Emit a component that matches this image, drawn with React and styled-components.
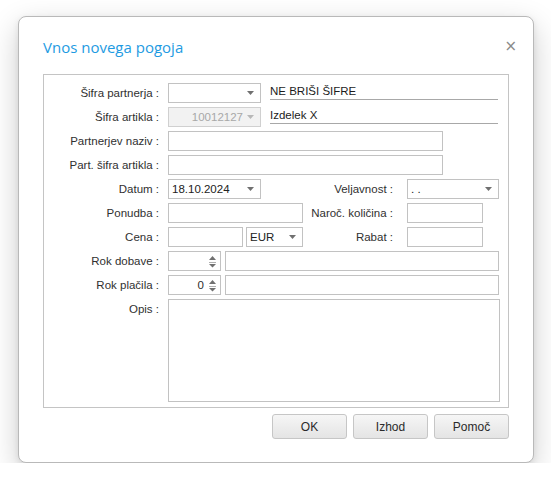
import styled, { createGlobalStyle } from "styled-components";

const GlobalStyle = createGlobalStyle`
  html, body {
    margin: 0;
    padding: 0;
    background: #ffffff;
  }
  body {
    font-family: "Liberation Sans", Arial, sans-serif;
    font-size: 11.5px;
    color: #2c2c2c;
  }
`;

function ArrowDown({ color = "#707070" }) {
  return (
    <svg width="7" height="4" viewBox="0 0 7 4">
      <path d="M0 0h7L3.5 4z" fill={color} />
    </svg>
  );
}

function SpinArrows() {
  return (
    <SpinBox>
      <svg width="7" height="13" viewBox="0 0 7 13">
        <path d="M0 5L3.5 1 7 5z" fill="#707070" />
        <path d="M0 7.5h7" stroke="#b0b0b0" strokeWidth="1" />
        <path d="M0 9h7L3.5 12.5z" fill="#707070" />
      </svg>
    </SpinBox>
  );
}

function Combo({ width, value, disabled }) {
  return (
    <ComboBox $width={width} $disabled={disabled}>
      <ComboValue $disabled={disabled}>{value}</ComboValue>
      <ArrowDown color={disabled ? "#b8b8b8" : "#707070"} />
    </ComboBox>
  );
}

function Spinner({ value }) {
  return (
    <SpinField>
      <SpinValue>{value}</SpinValue>
      <SpinArrows />
    </SpinField>
  );
}

function App() {
  return (
    <>
      <GlobalStyle />
      <Dialog>
        <Header>
          <Title>Vnos novega pogoja</Title>
          <Close>×</Close>
        </Header>
        <GroupBox>
          <Row>
            <Label>Šifra partnerja :</Label>
            <Fields>
              <Combo width={93} value="" />
              <Caption>NE BRIŠI ŠIFRE</Caption>
            </Fields>
          </Row>
          <Row>
            <Label>Šifra artikla :</Label>
            <Fields>
              <Combo width={93} value="10012127" disabled />
              <Caption>Izdelek X</Caption>
            </Fields>
          </Row>
          <Row>
            <Label>Partnerjev naziv :</Label>
            <Fields>
              <Input $width={275} />
            </Fields>
          </Row>
          <Row>
            <Label>Part. šifra artikla :</Label>
            <Fields>
              <Input $width={275} />
            </Fields>
          </Row>
          <Row>
            <Label>Datum :</Label>
            <Fields>
              <LeftCell>
                <Combo width={93} value="18.10.2024" />
              </LeftCell>
              <SideLabel>Veljavnost :</SideLabel>
              <Combo width={92} value=". ." />
            </Fields>
          </Row>
          <Row>
            <Label>Ponudba :</Label>
            <Fields>
              <LeftCell>
                <Input $width={135} />
              </LeftCell>
              <SideLabel>Naroč. količina :</SideLabel>
              <Input $width={76} />
            </Fields>
          </Row>
          <Row>
            <Label>Cena :</Label>
            <Fields>
              <LeftCell>
                <Input $width={75} />
                <Combo width={57} value="EUR" />
              </LeftCell>
              <SideLabel>Rabat :</SideLabel>
              <Input $width={76} />
            </Fields>
          </Row>
          <Row>
            <Label>Rok dobave :</Label>
            <Fields>
              <Spinner value="" />
              <Input $width={274} />
            </Fields>
          </Row>
          <Row>
            <Label>Rok plačila :</Label>
            <Fields>
              <Spinner value="0" />
              <Input $width={274} />
            </Fields>
          </Row>
          <Row>
            <Label>Opis :</Label>
            <Fields>
              <Memo />
            </Fields>
          </Row>
        </GroupBox>
        <Buttons>
          <Button>OK</Button>
          <Button>Izhod</Button>
          <Button>Pomoč</Button>
        </Buttons>
      </Dialog>
    </>
  );
}

const Dialog = styled.div`
  box-sizing: border-box;
  margin: 16px 0 0 18px;
  width: 516px;
  height: 447px;
  padding: 0 24px;
  background: #ffffff;
  border: 1px solid #b9b9b9;
  border-radius: 8px;
  box-shadow: 0 10px 30px rgba(0, 0, 0, 0.2), 0 2px 6px rgba(0, 0, 0, 0.08);
`;

const Header = styled.div`
  display: flex;
  justify-content: space-between;
  align-items: center;
  height: 57px;
`;

const Title = styled.div`
  font-family: "Open Sans", "Noto Sans", sans-serif;
  font-size: 15px;
  color: #1e9be2;
  padding-top: 3px;
`;

const Close = styled.div`
  font-family: "DejaVu Sans", sans-serif;
  font-size: 15px;
  color: #8a8a8a;
  margin-right: -8px;
  padding-top: 1px;
`;

const GroupBox = styled.div`
  box-sizing: border-box;
  width: 466px;
  height: 334px;
  border: 1px solid #c4c4c4;
  padding: 8px 0 6px;
  display: flex;
  flex-direction: column;
  gap: 4px;
`;

const Row = styled.div`
  display: grid;
  grid-template-columns: 115px 1fr;
  column-gap: 9px;
  align-items: start;
`;

const Label = styled.div`
  text-align: right;
  line-height: 20px;
  white-space: nowrap;
  color: #303030;
`;

const Fields = styled.div`
  display: flex;
  align-items: start;
  gap: 4px;
`;

const LeftCell = styled.div`
  display: flex;
  gap: 3px;
  width: 135px;
`;

const SideLabel = styled.div`
  box-sizing: border-box;
  width: 100px;
  margin-left: -4px;
  padding-right: 10px;
  text-align: right;
  line-height: 20px;
  white-space: nowrap;
  color: #303030;
`;

const fieldBox = `
  box-sizing: border-box;
  height: 20px;
  border: 1px solid #c2c2c2;
  background: #ffffff;
`;

const Input = styled.div`
  ${fieldBox}
  width: ${(p) => p.$width}px;
`;

const ComboBox = styled.div`
  ${fieldBox}
  width: ${(p) => p.$width}px;
  display: flex;
  align-items: center;
  padding: 0 6px 0 3px;
  gap: 4px;
  background: ${(p) => (p.$disabled ? "#f2f2f2" : "#ffffff")};
  border-color: ${(p) => (p.$disabled ? "#d0d0d0" : "#c2c2c2")};
`;

const ComboValue = styled.div`
  flex: 1;
  text-align: ${(p) => (p.$disabled ? "right" : "left")};
  color: ${(p) => (p.$disabled ? "#a8a8a8" : "#222")};
  white-space: nowrap;
  overflow: hidden;
  line-height: 18px;
`;

const Caption = styled.div`
  box-sizing: border-box;
  flex: 1;
  margin: 0 10px 0 5px;
  height: 17px;
  line-height: 17px;
  border-bottom: 1px solid #a8a8a8;
  color: #1c1c1c;
`;

const SpinField = styled.div`
  ${fieldBox}
  width: 53px;
  display: flex;
  align-items: center;
  padding: 0 4px 0 3px;
  gap: 5px;
`;

const SpinValue = styled.div`
  flex: 1;
  text-align: right;
  line-height: 18px;
`;

const SpinBox = styled.div`
  display: flex;
  align-items: center;
`;

const Memo = styled.div`
  ${fieldBox}
  width: 332px;
  height: 103px;
`;

const Buttons = styled.div`
  display: flex;
  justify-content: flex-end;
  gap: 6px;
  margin-top: 6px;
`;

const Button = styled.button`
  box-sizing: border-box;
  width: 75px;
  height: 25px;
  border: 1px solid #c6c6c6;
  border-radius: 3px;
  background: linear-gradient(#f6f6f6, #e4e4e4);
  font-family: "Liberation Sans", Arial, sans-serif;
  font-size: 12px;
  color: #2a2a2a;
  padding: 0;
`;

export default App;
